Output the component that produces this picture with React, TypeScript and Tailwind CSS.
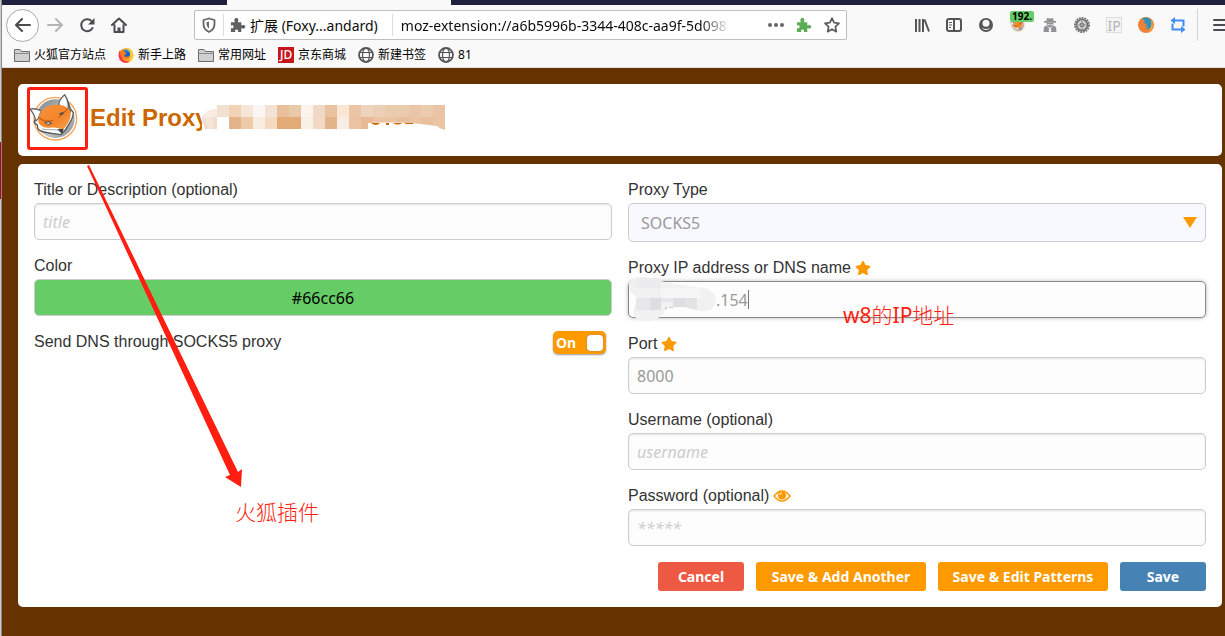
import { ReactNode, useState } from 'react';
import { FaStar } from 'react-icons/fa';

const bookmarks = [
  { label: '火狐官方站点', icon: <FolderIcon /> },
  { label: '新手上路', icon: <FirefoxIcon /> },
  { label: '常用网址', icon: <FolderIcon /> },
  { label: '京东商城', icon: <span className="flex size-4 items-center justify-center bg-[#c8161d] font-['Noto_Sans'] text-[12px] font-medium text-white">JD</span> },
  { label: '新建书签', icon: <GlobeIcon /> },
  { label: '81', icon: <GlobeIcon /> },
];

// mosaic colours, one entry per 12px cell
const mosaicTop = ['#f2e0d0', '#f0d2b4', '#f7e6d8', '#fbf6f3', '#f4e2d4', '#e8bf98', '#eac9a9', '#fbf3ec', '#efd8c5', '#eac2a0', '#fbe7d6', '#ebc5a5', '#eed3bd', '#edcfb6', '#eacbae', '#ebcbb0', '#e9c6a8', '#ecccb0', '#eac4a4'];
const mosaicBottom = ['#ffffff', '#e3b489', '#edcaa8', '#f9ede2', '#f6dac0', '#e2aa76', '#e2aa76', '#faf1e6', '#f1d9c3', '#e3b48a', '#f8eee6', '#ebc3a1', '#e8b994', '#e9c5a5', '#eac3a2', '#e8c09e', '#eac3a2', '#e9c09c', '#eac4a4'];

function FolderIcon() {
  return (
    <svg viewBox="0 0 16 16" className="size-4">
      <path d="M.5 14.500v-12h5.500l1.500 2h8v10z" fill="#cfcfd0" stroke="#6b6b6b" />
      <path d="M.5 6.500h15" stroke="#8a8a8a" />
    </svg>
  );
}

function FirefoxIcon() {
  return (
    <svg viewBox="0 0 16 16" className="size-4">
      <circle cx="8" cy="8.500" r="7.300" fill="#ff9a1f" />
      <path d="M9 .5c4 1 7.500 5 6 10.500C14 14 11 15.500 8 15.800 13 13 13 8 11 5.500 9.500 4 9 2 9 .5z" fill="#ffcb2f" />
      <path d="M1.500 3.500C0 7 0 13 5 15.200c3 1 5 .5 7-.7-5 .5-8-1.500-8-5z" fill="#ff2f55" />
      <circle cx="7.800" cy="7" r="4.300" fill="#1b5fd0" />
      <path d="M7 2.500c3 0 5 2 5.200 4.500C11 5 9 4 7 4.500z" fill="#18a4e8" />
      <path d="M1.500 3.500l3 1.200L6.500 3l.3 2.200 2 1.300-2.500 1.700c.2 2 3 2 4.700.5C10 12 5 12.500 3 10z" fill="#ff7a1a" />
    </svg>
  );
}

function OldFirefoxIcon() {
  return (
    <svg viewBox="0 0 16 16" className="size-4">
      <circle cx="8" cy="8" r="8" fill="#ef8136" />
      <path d="M4 1.500C8-.8 14 1.500 14 7c0 4-4 6-7 4.500 2 0 3-1 3-2H7c0-1 2-1 2-2.500L6 6c0-1 1-1 1-2z" fill="#2a93bf" />
      <path d="M13 3c3 4 2 10-3 12 3-3 4-7 3-12z" fill="#f4a63c" />
    </svg>
  );
}

function GlobeIcon() {
  return (
    <svg viewBox="0 0 16 16" className="size-4" fill="none" stroke="#555">
      <circle cx="8" cy="8" r="7" strokeWidth="1.800" />
      <ellipse cx="8" cy="8" rx="3.500" ry="7" strokeWidth="1.200" />
      <path d="M1.500 5.500h13M1.500 10.500h13" strokeWidth="1.200" />
    </svg>
  );
}

function PuzzleIcon({ className }: { className: string }) {
  return (
    <svg viewBox="0 0 17 17" className={className} fill="currentColor">
      <path d="M1 5.500h4.300C4.300 4 4.300 1 6.800 1s2.500 3 1.500 4.500H12V9c1.500-1 4.200-.8 4.200 1.300s-2.700 2.300-4.200 1.300V16H8.300c1-2-.2-2.800-1.300-2.800S4.800 14 5.700 16H1v-4.300c2 .9 2.800-.2 2.800-1.400S3 8.200 1 9.200z" />
    </svg>
  );
}

function FoxLogo({ className }: { className: string }) {
  return (
    <svg viewBox="14 32 162 150" className={className}>
      <defs>
        <linearGradient id="disc" x1="0" y1="0" x2="1" y2="1">
          <stop offset="0" stopColor="#7f8386" />
          <stop offset=".6" stopColor="#c4c6c8" />
          <stop offset="1" stopColor="#7f8386" />
        </linearGradient>
        <linearGradient id="fur" x1="0" y1="0" x2="1" y2="1">
          <stop offset="0" stopColor="#f8933a" />
          <stop offset=".6" stopColor="#f4842a" />
          <stop offset="1" stopColor="#fba552" />
        </linearGradient>
      </defs>
      <circle cx="96" cy="109" r="64" fill="#fff" stroke="#f8a252" strokeWidth="4" />
      <circle cx="96" cy="109" r="58" fill="url(#disc)" />
      <path d="M46 104c-8 5-14 11-13 16 2 4 6 6 9 8 0 8 2 14 8 17 16 8 40 8 62 12 10-8 18-18 24-30 6-10 14-22 14-36l-8-10z" fill="#fff" stroke="#55595c" strokeWidth="4" strokeLinejoin="round" />
      <path d="M19 80c12-2 24 0 35 6l-10 24-7 6c-2-14-8-26-18-36z" fill="#fff" stroke="#66696c" strokeWidth="4" strokeLinejoin="round" />
      <path d="M106 66c2-12 8-21 18-29 8 14 17 32 17 52l-10 4z" fill="#fff" stroke="#66696c" strokeWidth="4" strokeLinejoin="round" />
      <path d="M126 42c9 14 14 28 14 44l-7-10c0-12-2-22-7-34z" fill="#606467" />
      <path d="M46 122c-3-14 2-30 14-41 12-10 30-15 50-13 12 1 26 8 31 19 3 10 0 22-5 32-4 8-10 17-18 23l-10-4c-10-2-18-4-30-2-14 1-26-4-32-14z" fill="url(#fur)" />
      <path d="M48 106c12 12 26 12 40 8M108 104c2-14 16-10 24-24" fill="none" stroke="#c65f14" strokeWidth="4" strokeLinecap="round" />
      <path d="M62 122l13-6 12 7-11 5zM106 96l9-6 8 1-7 8z" fill="#4b4e50" />
      <path d="M68 122l7-2 6 3-6 2z" fill="#e8e8e8" />
      <path d="M56 140c18 4 34 0 50 4" fill="none" stroke="#a3a5a7" strokeWidth="3" />
      <path d="M104 141l16 0-5 12z" fill="#33373a" stroke="#33373a" strokeWidth="2" />
    </svg>
  );
}

function Mosaic() {
  return (
    <svg viewBox="202 104 244 28" className="h-7 w-[244px]" aria-hidden="true">
      <path d="M202 116q4-9 12-8h4v22h-16z" fill="#fff" />
      <path d="M205 113q4-4 12-4v8h-16z" fill="#f8ebe0" />
      <path d="M201 117h16v12h-12z" fill="#f0dccb" />
      <path d="M202 117h11v12h-4z" fill="#f6e6da" />
      {mosaicTop.map((fill, i) => (
        <rect key={i} x={217 + i * 12} y="105" width="12" height="12" fill={fill} />
      ))}
      {mosaicBottom.map((fill, i) => (
        <rect key={i} x={217 + i * 12} y="117" width="12" height="12" fill={fill} />
      ))}
      <path d="M368 123q45-2 78 5v3h-78z" fill="#fff" />
      <path d="M371 123q5 4 9 0zM386 123h3v2h-3zM393 123q5 3 9 0zM405 123h8v1h-8z" fill="#cc6600" />
      <path d="M439 105h6v25l-6-2z" fill="#eac4a4" />
    </svg>
  );
}

function NavButton({ label, children }: { label: string; children: ReactNode }) {
  return (
    <button aria-label={label} className="relative flex size-8 shrink-0 items-center justify-center text-[#555]">
      {children}
    </button>
  );
}

function BrowserBar() {
  return (
    <header className="border-b border-[#e0e0e2] bg-[#f9f9fa] font-['Noto_Sans','Noto_Sans_CJK_SC',sans-serif]">
      <div className="flex h-[5px] bg-[#20213f]">
        <div className="ml-[225px] w-56 bg-[#f9f9fa]" />
      </div>
      <nav className="flex h-10 items-center pl-1">
        <button aria-label="Back" className="flex size-[33px] shrink-0 items-center justify-center rounded-full border border-[#a9a9ab] bg-white">
          <svg viewBox="0 0 16 16" className="size-4" fill="none" stroke="#4c4c4f" strokeWidth="2" strokeLinecap="round" strokeLinejoin="round">
            <path d="M15 8H1.500M7 2L1 8l6 6" />
          </svg>
        </button>
        <NavButton label="Forward">
          <svg viewBox="0 0 16 16" className="size-4" fill="none" stroke="#b5b5b7" strokeWidth="2" strokeLinecap="round" strokeLinejoin="round">
            <path d="M1 8h13.500M9 2l6 6-6 6" />
          </svg>
        </NavButton>
        <NavButton label="Reload">
          <svg viewBox="0 0 16 16" className="size-4" fill="none" stroke="#4c4c4f" strokeWidth="2">
            <path d="M13 4.500A6 6 0 1 0 13.500 11" strokeLinecap="round" />
            <path d="M15.500 1v6.500H9z" fill="#4c4c4f" stroke="none" />
          </svg>
        </NavButton>
        <NavButton label="Home">
          <svg viewBox="0 0 16 16" className="size-4" fill="none" stroke="#4c4c4f" strokeWidth="2" strokeLinecap="round" strokeLinejoin="round">
            <path d="M1 8l7-6.500L15 8M3.500 8v7h9V8" />
            <path d="M8 15v-4.500" strokeWidth="3" strokeLinecap="butt" />
          </svg>
        </NavButton>

        <div className="mx-[59px] flex h-[30px] min-w-0 flex-1 items-center rounded-[2px] border border-[#bebec0] bg-white text-[14px] text-[#0c0c0d]">
          <svg viewBox="0 0 16 16" className="mx-[6px] size-4 shrink-0" fill="none" stroke="#66666a" strokeWidth="1.800">
            <path d="M8 1.500l5.500 1.500v4c0 4-2.500 6.500-5.500 8-3-1.500-5.500-4-5.500-8V3z" strokeLinejoin="round" />
            <path d="M8 4.500v7C6 10 5.500 8.500 5.500 5.200z" fill="#66666a" stroke="none" />
          </svg>
          <span className="h-[22px] w-px bg-[#dcdcde]" />
          <PuzzleIcon className="ml-[6px] size-4 shrink-0 text-[#5f5f62]" />
          <span className="ml-1 shrink-0 whitespace-nowrap">扩展 (Foxy...andard)</span>
          <span className="ml-[14px] h-[22px] w-px shrink-0 bg-[#dcdcde]" />
          <input
            aria-label="Address"
            readOnly
            value="moz-extension://a6b5996b-3344-408c-aa9f-5d098"
            className="ml-2 w-0 flex-1 bg-transparent outline-none [mask-image:linear-gradient(to_left,transparent_4px,black_34px)]"
          />
          <div className="mr-[6px] ml-[34px] flex shrink-0 items-center gap-3">
            <svg viewBox="0 0 16 16" className="size-4" fill="#66666a">
              <circle cx="2" cy="8" r="2" />
              <circle cx="8" cy="8" r="2" />
              <circle cx="14" cy="8" r="2" />
            </svg>
            <PuzzleIcon className="size-4 text-[#5aad54]" />
            <svg viewBox="0 0 16 16" className="size-4" fill="none" stroke="#5f5f62" strokeWidth="1.800" strokeLinejoin="round">
              <path d="M8 1.200l2.100 4.500 4.900.6-3.600 3.400.9 4.900L8 12.200l-4.300 2.400.9-4.900L1 6.300l4.900-.6z" />
            </svg>
          </div>
        </div>

        <div className="flex shrink-0 items-center">
          <NavButton label="Library">
            <svg viewBox="0 0 16 16" className="size-4" stroke="currentColor" strokeWidth="2">
              <path d="M2 2v13M5.500 2v13M9 2v13M10.500 2.500L15 14.500" />
            </svg>
          </NavButton>
          <NavButton label="Sidebars">
            <svg viewBox="0 0 16 16" className="size-4" fill="none" stroke="currentColor">
              <rect x="1" y="2" width="14" height="12" rx="2" strokeWidth="2" />
              <path d="M8 2v12" strokeWidth="2" />
              <path d="M3 5.500h3M3 8h3M3 10.500h2" />
            </svg>
          </NavButton>
          <NavButton label="Account">
            <svg viewBox="0 0 16 16" className="size-4">
              <circle cx="8" cy="8" r="7" fill="currentColor" />
              <circle cx="8" cy="6.300" r="3.500" fill="#f9f9fa" />
              <path d="M3.500 10.500q4.500 3 9 0-1.500 2.500-4.500 2.500t-4.500-2.500z" fill="#f9f9fa" />
            </svg>
          </NavButton>
          <NavButton label="FoxyProxy">
            <FoxLogo className="size-4" />
            <span className="absolute top-[2px] left-2 rounded-xs bg-[#66cc66] px-[2px] text-[10px] leading-[11px] font-bold text-black">192.</span>
          </NavButton>
          <NavButton label="Private">
            <svg viewBox="0 0 16 16" className="size-4" fill="#929294">
              <path d="M5 1l3 .6L11 1l.7 3H14v1.800H2V4h2.300z" />
              <path d="M4.500 6h7c0 3-1.500 4.500-3.500 4.500S4.500 9 4.500 6z" />
              <path d="M2 10l2.500-1.500L7.500 12l-1 1 .8 2H1.500zM14 10l-2.500-1.500L8.500 12l1 1-.8 2h5.800z" />
              <path d="M5.500 7.200h2v1h-2zM8.500 7.200h2v1h-2z" fill="#f9f9fa" />
            </svg>
          </NavButton>
          <NavButton label="Settings">
            <svg viewBox="0 0 16 16" className="size-4" fill="none">
              <circle cx="8" cy="8" r="7" stroke="#6e6e6e" strokeWidth="2" strokeDasharray="1.800 .9" />
              <circle cx="8" cy="8" r="5.500" fill="#d0d0d0" stroke="#6e6e6e" strokeWidth="1.500" />
              <circle cx="8" cy="8" r="2" fill="#a2a2a2" stroke="#777" />
              <path d="M8 3.500V6M8 10v2.500M3.500 8H6M10 8h2.500" stroke="#999" />
            </svg>
          </NavButton>
          <NavButton label="IP">
            <span className="flex size-4 items-center justify-center border border-[#dedede] bg-[#f4f4f4] text-[14px] text-[#b4b4b4]">IP</span>
          </NavButton>
          <NavButton label="Firefox">
            <OldFirefoxIcon />
          </NavButton>
          <NavButton label="Switch">
            <svg viewBox="0 0 16 16" className="size-4" fill="none" stroke="#3f8cf4" strokeWidth="2">
              <path d="M4 3.500h9.500v6M12 12.500H2.500v-6" />
              <path d="M5 0v7L.5 3.500zM11 9v7l4.500-3.500z" fill="#3f8cf4" stroke="none" />
            </svg>
          </NavButton>
          <span className="ml-[3px] h-8 w-px bg-[#d4d4d6]" />
          <button aria-label="Menu" className="ml-[15px] h-8 w-3">
            <svg viewBox="0 0 12 14" className="h-[14px] w-3" stroke="#4c4c4f" strokeWidth="2" strokeLinecap="round">
              <path d="M1 2h12M1 7h12M1 12h12" />
            </svg>
          </button>
        </div>
      </nav>
      <div className="flex h-[22px] items-start gap-3 pl-3 text-[12px] text-black">
        {bookmarks.map((b) => (
          <a key={b.label} href="#" className="flex h-5 items-center gap-1 whitespace-nowrap">
            {b.icon}
            {b.label}
          </a>
        ))}
      </div>
    </header>
  );
}

const inputClass =
  "block h-[37px] w-full rounded-[5px] border border-[#ccc] bg-[#fdfdfd] px-2 font-['Noto_Sans',sans-serif] text-[16px] text-[#999] shadow-[inset_0_1px_2px_#e4e4e4] outline-none placeholder:italic placeholder:text-[#ccc]";

const labelClass = 'flex h-[27px] items-center gap-1';

const buttonClass = 'h-[29px] rounded-[3px] text-center text-white';

function RequiredStar() {
  return <FaStar className="size-4 text-[#f90]" />;
}

export default function App() {
  const [dns, setDns] = useState(true);

  return (
    <div className="relative flex min-h-screen overflow-hidden bg-[#663300] font-['Liberation_Sans',sans-serif] text-[16px] text-[#333]">
      {/* edge of the window behind */}
      <div className="w-[2px] shrink-0 border-r border-[#8a8a8a] bg-[linear-gradient(#ccc_142px,#b00020_142px,#b00020_199px,#ccc_199px)]" />

      <div className="min-w-0 flex-1">
        <BrowserBar />

        <main className="space-y-2 pt-4 pr-[3px] pb-4 pl-4">
          <section className="flex h-[72px] items-center gap-2 rounded-[5px] bg-white pb-1 pl-[10px]">
            <FoxLogo className="h-[50px] w-[54px]" />
            <h1 className="relative text-[24px] leading-7 font-bold whitespace-nowrap text-[#cc6600]">
              Edit Proxy
              <span className="absolute top-0 left-28">
                <Mosaic />
              </span>
            </h1>
          </section>

          <form className="rounded-[5px] bg-white px-4 pt-3 pb-4" onSubmit={(e) => e.preventDefault()}>
            <div className="grid grid-cols-2 gap-4">
              <div className="space-y-3">
                <div>
                  <label htmlFor="title" className={labelClass}>Title or Description (optional)</label>
                  <input id="title" placeholder="title" className={inputClass} />
                </div>
                <div>
                  <label htmlFor="color" className={labelClass}>Color</label>
                  <input
                    id="color"
                    defaultValue="#66cc66"
                    className="block h-[37px] w-full rounded-[5px] border border-[#ccc] bg-[#66cc66] text-center font-['Noto_Sans',sans-serif] text-[16px] text-black outline-none"
                  />
                </div>
                <label className="flex justify-between pr-[6px]">
                  <span className={labelClass}>Send DNS through SOCKS5 proxy</span>
                  <input type="checkbox" className="sr-only" checked={dns} onChange={() => setDns(!dns)} />
                  <span className="mt-[3px] flex h-[23px] w-[53px] items-center justify-between rounded-[5px] bg-[#f90] px-[3px] font-['Noto_Sans',sans-serif] text-[14px] leading-5 font-bold text-white shadow-[0_1px_2px_#999]">
                    {dns ? 'On' : 'Off'}
                    <span className="size-4 rounded-[4px] bg-white shadow-[0_0_2px_#888]" />
                  </span>
                </label>
              </div>

              <div className="space-y-3">
                <div>
                  <label htmlFor="type" className={labelClass}>Proxy Type</label>
                  <div className="relative">
                    <select id="type" className="block h-[39px] w-full appearance-none rounded-[5px] border border-[#ccc] bg-[#f8f8ff] px-3 font-['Noto_Sans',sans-serif] text-[16px] text-[#999] outline-none">
                      <option>SOCKS5</option>
                      <option>SOCKS4</option>
                      <option>HTTP</option>
                    </select>
                    <svg viewBox="0 0 14 11" className="pointer-events-none absolute top-[14px] right-[9px] h-[11px] w-[14px]" fill="#f90">
                      <path d="M0 0h14L7 11z" />
                    </svg>
                  </div>
                </div>
                <div>
                  <label htmlFor="address" className={labelClass}>Proxy IP address or DNS name <RequiredStar /></label>
                  <div className="relative">
                    <input
                      id="address"
                      defaultValue=".154"
                      className="block h-[37px] w-full rounded-[5px] border border-[#888] bg-[#fdfdfd] pr-2 pl-[87px] font-['Noto_Sans',sans-serif] text-[16px] text-[#999] shadow-[0_0_4px_#bbb] outline-none"
                    />
                    <span className="absolute top-[9px] left-[120px] h-[19px] w-px bg-[#777]" />
                    <svg viewBox="626 272 96 52" className="pointer-events-none absolute -top-2 -left-[2px] h-[52px] w-24" aria-hidden="true">
                      <path d="M629 282q7-7 16-6l24 6 34 5q14 4 13 13-3 12-16 10l-18-4-15 0q-8 16-21 14-15 0-12-14l7-8q-14-6-12-16z" fill="#f1f1f2" />
                      <path d="M636 277h25v10h-25z" fill="#ececee" />
                      <path d="M661 287h39v11h-39z" fill="#f6f6f6" />
                      <path d="M636 297h14v12h-14zM661 297h12v4h-12z" fill="#e8e6e8" />
                      <path d="M650 297h11v12h-11zM673 297h12v9h-12z" fill="#dedee2" />
                      <path d="M685 297h12v12l-12-3z" fill="#e3e3e6" />
                      <path d="M665 306h2v2h-2zM669 306h4v1h-4z" fill="#ccc" />
                    </svg>
                  </div>
                </div>
                <div>
                  <label htmlFor="port" className={labelClass}>Port <RequiredStar /></label>
                  <input id="port" defaultValue="8000" className={inputClass} />
                </div>
                <div>
                  <label htmlFor="username" className={labelClass}>Username (optional)</label>
                  <input id="username" placeholder="username" className={inputClass} />
                </div>
                <div>
                  <label htmlFor="password" className={labelClass}>
                    Password (optional)
                    <svg viewBox="0 0 18 12" className="h-3 w-[18px]">
                      <path d="M1 6q8-10 16 0-8 10-16 0z" fill="none" stroke="#f90" strokeWidth="1.500" />
                      <circle cx="9" cy="5.500" r="4" fill="#f90" />
                      <path d="M6.500 5q.5-2 2.500-2" fill="none" stroke="#fff" />
                    </svg>
                  </label>
                  <input id="password" type="password" placeholder="*****" className={inputClass} />
                </div>
              </div>
            </div>

            <div className="mt-4 flex justify-end gap-3 font-['Noto_Sans',sans-serif] text-[14px] font-bold">
              <button type="button" className={`${buttonClass} w-[86px] bg-[#ee5943]`}>Cancel</button>
              <button type="button" className={`${buttonClass} w-[170px] bg-[#f90]`}>Save &amp; Add Another</button>
              <button type="button" className={`${buttonClass} w-[170px] bg-[#f90]`}>Save &amp; Edit Patterns</button>
              <button type="submit" className={`${buttonClass} w-[86px] bg-[#4682b4]`}>Save</button>
            </div>
          </form>
        </main>
      </div>

      {/* red notes drawn over the page */}
      <div className="pointer-events-none absolute inset-0 font-['Noto_Sans','Noto_Sans_CJK_SC',sans-serif] text-[21px] leading-7 text-[#ff1e10]">
        <span className="absolute top-[87px] left-[27px] h-[63px] w-[61px] rounded-[3px] border-3 border-[#ff1e10]" />
        <svg viewBox="80 160 170 330" className="absolute top-40 left-20 h-[330px] w-[170px]" fill="#ff1e10">
          <path d="M87 166l2-1 149 307 4-3-1 18-16-10 5-2z" />
        </svg>
        <span className="absolute top-[497px] left-[235px] font-['Noto_Sans_CJK_SC'] font-light">火狐插件</span>
        <span className="absolute top-[300px] left-[843px]">w8<span className="font-['Noto_Sans_CJK_SC'] font-light">的</span>IP<span className="font-['Noto_Sans_CJK_SC'] font-light">地址</span></span>
      </div>
    </div>
  );
}
